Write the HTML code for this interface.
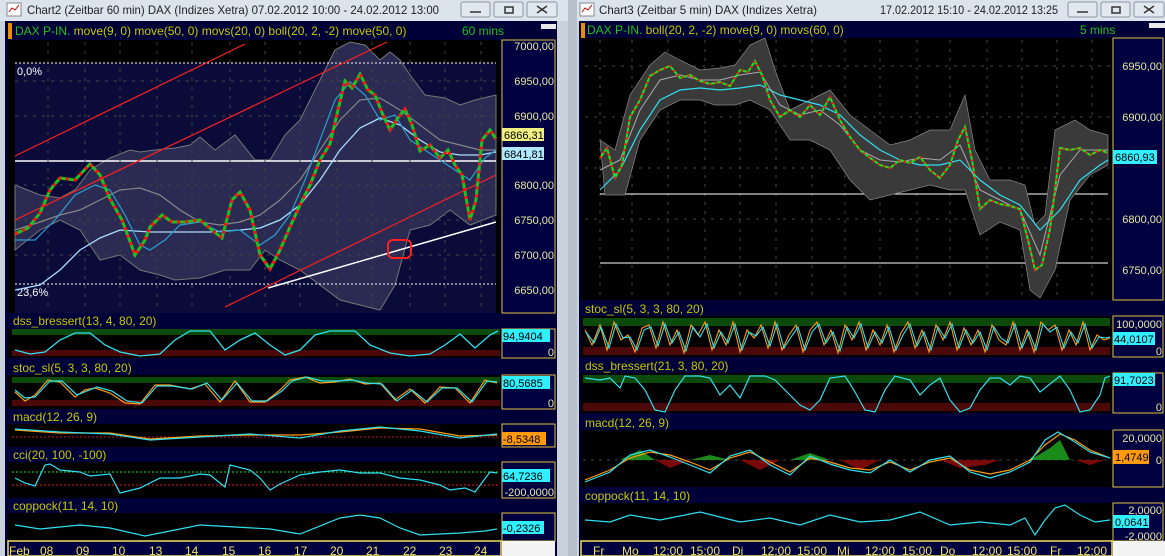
<!DOCTYPE html>
<html><head><meta charset="utf-8"><style>
html,body{margin:0;padding:0;background:#c8d0da;}
svg{display:block;font-family:"Liberation Sans",sans-serif;}
</style></head><body>
<svg width="1165" height="556" viewBox="0 0 1165 556" xmlns="http://www.w3.org/2000/svg">
<rect x="0" y="0" width="1165" height="556" fill="#c9d2dc"/>
<rect x="0" y="0" width="568" height="21" fill="#dbe3ec"/>
<rect x="577" y="0" width="588" height="21" fill="#dbe3ec"/>
<rect x="568" y="0" width="9" height="556" fill="#b8c2cc"/>
<rect x="7" y="3" width="14" height="13" fill="#fff" stroke="#888"/><path d="M9 12 l3-4 3 2 4-5" stroke="#c00" fill="none"/>
<rect x="580" y="3" width="14" height="13" fill="#fff" stroke="#888"/><path d="M582 12 l3-4 3 2 4-5" stroke="#c00" fill="none"/>
<text x="27" y="14" font-size="12" fill="#222" textLength="412" lengthAdjust="spacingAndGlyphs">Chart2 (Zeitbar 60 min)  DAX (Indizes Xetra) 07.02.2012 10:00 - 24.02.2012 13:00</text>
<text x="599" y="14" font-size="12" fill="#222" textLength="218" lengthAdjust="spacingAndGlyphs">Chart3 (Zeitbar 5 min)  DAX (Indizes Xetra)</text>
<text x="880" y="14" font-size="12" fill="#222" textLength="178" lengthAdjust="spacingAndGlyphs">17.02.2012 15:10 - 24.02.2012 13:25</text>
<g fill="#e2e8ef" stroke="#8a96a4">
<rect x="461" y="2" width="29" height="15" rx="2"/><rect x="494" y="2" width="29" height="15" rx="2"/><rect x="527" y="2" width="30" height="15" rx="2"/>
<rect x="1068" y="2" width="29" height="15" rx="2"/><rect x="1101" y="2" width="29" height="15" rx="2"/><rect x="1134" y="2" width="30" height="15" rx="2"/>
</g>
<g stroke="#333" fill="none" stroke-width="1.5">
<path d="M470 12h11M505 7h8v6h-8zM537 6l10 7M547 6l-10 7"/>
<path d="M1077 12h11M1112 7h8v6h-8zM1144 6l10 7M1154 6l-10 7"/>
</g>

<!-- LEFT CHART -->
<rect x="5" y="21" width="552" height="535" fill="#000038"/>
<rect x="8" y="23" width="4" height="16" fill="#f08c00"/>
<text x="15" y="35" font-size="12" fill="#c8c800"><tspan fill="#20c020">DAX P-IN.</tspan> move(9, 0) move(50, 0) movs(20, 0) boll(20, 2, -2) move(50, 0)</text>
<text x="462" y="35" font-size="12" fill="#20c020">60 mins</text>
<rect x="541" y="24" width="15" height="5" fill="#e8e8e8"/>
<rect x="8" y="40" width="493" height="273" fill="#000"/>
<rect x="15" y="63" width="481" height="250" fill="#0b0b3a"/>
<polygon fill="#2a2a52" stroke="#777" points="15,185 40,195 60,198 75,190 90,170 110,158 130,150 140,152 155,150 175,148 190,145 200,137 215,150 235,135 255,160 270,160 285,135 300,120 320,80 335,50 350,42 365,45 380,60 390,52 400,60 410,75 425,95 445,98 460,105 475,100 496,95 496,215 470,225 450,210 430,225 410,230 395,285 380,310 360,305 340,300 320,285 300,270 280,260 265,250 250,270 225,270 200,278 175,280 160,275 140,270 120,255 100,260 80,230 60,220 40,230 15,250"/>
<line x1="15" y1="63" x2="496" y2="63" stroke="#fff" stroke-dasharray="2,2"/>
<line x1="15" y1="284" x2="496" y2="284" stroke="#fff" stroke-dasharray="2,2"/>
<line x1="15" y1="161" x2="496" y2="161" stroke="#fff" stroke-width="1.5"/>
<text x="17" y="75" font-size="11" fill="#fff">0,0%</text>
<text x="17" y="296" font-size="11" fill="#fff">23,6%</text>
<g stroke="#444" stroke-dasharray="3,6">
<line x1="15" y1="81" x2="496" y2="81"/><line x1="15" y1="116" x2="496" y2="116"/><line x1="15" y1="185" x2="496" y2="185"/><line x1="15" y1="220" x2="496" y2="220"/><line x1="15" y1="255" x2="496" y2="255"/>
<line x1="48" y1="42" x2="48" y2="312"/><line x1="85" y1="42" x2="85" y2="312"/><line x1="120" y1="42" x2="120" y2="312"/><line x1="157" y1="42" x2="157" y2="312"/><line x1="192" y1="42" x2="192" y2="312"/><line x1="230" y1="42" x2="230" y2="312"/><line x1="265" y1="42" x2="265" y2="312"/><line x1="300" y1="42" x2="300" y2="312"/><line x1="337" y1="42" x2="337" y2="312"/><line x1="372" y1="42" x2="372" y2="312"/><line x1="410" y1="42" x2="410" y2="312"/><line x1="445" y1="42" x2="445" y2="312"/><line x1="481" y1="42" x2="481" y2="312"/>
</g>
<g stroke="#ff2020" stroke-width="1.2">
<line x1="15" y1="156" x2="245" y2="44"/><line x1="15" y1="220" x2="387" y2="42"/><line x1="225" y1="307" x2="496" y2="175"/>
</g>
<line x1="268" y1="288" x2="496" y2="222" stroke="#fff" stroke-width="1.5"/>
<rect x="388" y="240" width="23" height="18" rx="5" fill="none" stroke="#ff2020" stroke-width="2"/>
<polyline fill="none" stroke="#aaddff" stroke-width="1.3" points="15,290 40,285 60,270 80,250 100,238 120,230 150,232 180,232 210,232 240,230 260,228 280,220 300,205 320,180 340,150 360,128 380,118 400,125 420,140 440,152 460,155 480,155 496,152"/>
<polyline fill="none" stroke="#888" stroke-width="1.2" points="15,230 40,222 60,215 80,210 100,200 120,190 140,188 160,195 180,210 200,222 220,225 240,222 260,215 280,200 300,180 320,150 340,120 360,100 380,98 400,110 420,125 440,140 460,145 480,150 496,150"/>
<polyline fill="none" stroke="#2a9fd0" stroke-width="1.2" points="15,240 35,240 55,220 75,195 95,185 110,190 125,215 140,245 150,250 165,240 180,225 200,222 220,232 240,230 260,245 275,235 290,215 305,180 320,140 335,100 350,82 365,95 380,120 395,115 410,140 425,150 440,160 455,170 470,180 485,158 496,150"/>
<polyline fill="none" stroke="#20c020" stroke-width="3" points="15,234 28,228 40,213 50,190 60,178 75,180 90,164 100,175 110,199 122,220 135,255 145,240 150,227 162,215 172,222 185,222 200,220 212,230 222,238 232,200 240,192 250,210 260,255 270,269 280,250 290,227 300,205 310,185 320,160 330,144 338,110 345,81 352,88 360,74 368,90 375,95 383,115 390,130 398,118 405,109 412,125 420,151 430,145 440,158 448,150 455,165 462,175 470,220 476,200 482,140 490,130 496,139"/>
<polyline fill="none" stroke="#ff1010" stroke-width="3" stroke-dasharray="3,5" points="15,234 28,228 40,213 50,190 60,178 75,180 90,164 100,175 110,199 122,220 135,255 145,240 150,227 162,215 172,222 185,222 200,220 212,230 222,238 232,200 240,192 250,210 260,255 270,269 280,250 290,227 300,205 310,185 320,160 330,144 338,110 345,81 352,88 360,74 368,90 375,95 383,115 390,130 398,118 405,109 412,125 420,151 430,145 440,158 448,150 455,165 462,175 470,220 476,200 482,140 490,130 496,139"/>
<rect x="502" y="40" width="53" height="273" fill="#000040" stroke="#e0c040"/>
<g font-size="11" fill="#e8e8a0" text-anchor="end">
<text x="554" y="50">7000,00</text><text x="554" y="85">6950,00</text><text x="554" y="120">6900,00</text><text x="554" y="189">6800,00</text><text x="554" y="224">6750,00</text><text x="554" y="259">6700,00</text><text x="554" y="294">6650,00</text>
</g>
<rect x="502" y="128" width="42" height="13" fill="#f0f080"/><text x="504" y="139" font-size="11" fill="#000">6866,31</text>
<rect x="502" y="147" width="42" height="13" fill="#b0e8ff"/><text x="504" y="158" font-size="11" fill="#000">6841,81</text>

<g font-size="12" fill="#c8c800">
<text x="13" y="325">dss_bressert(13, 4, 80, 20)</text>
<text x="13" y="372">stoc_sl(5, 3, 3, 80, 20)</text>
<text x="13" y="421">macd(12, 26, 9)</text>
<text x="13" y="459">cci(20, 100, -100)</text>
<text x="13" y="510">coppock(11, 14, 10)</text>
</g>
<rect x="8" y="329" width="493" height="29" fill="#000"/>
<rect x="12" y="329" width="488" height="6" fill="#0c4a0c"/><rect x="12" y="350" width="488" height="6" fill="#4a0808"/>
<polyline fill="none" stroke="#30e0f0" stroke-width="1.3" points="15,350 30,354 45,352 60,340 75,333 90,333 105,345 120,352 140,356 160,354 175,340 190,331 210,331 225,350 240,340 255,333 270,345 285,355 300,350 315,335 330,331 355,331 370,345 390,353 410,356 430,354 445,345 460,334 475,348 490,335 498,331"/>
<rect x="8" y="375" width="493" height="34" fill="#000"/>
<rect x="12" y="377" width="488" height="6" fill="#0c4a0c"/><rect x="12" y="400" width="488" height="6" fill="#4a0808"/>
<polyline fill="none" stroke="#ff9a10" stroke-width="1.2" points="15,392 25,401 35,395 48,380 60,382 75,397 85,390 95,388 110,393 125,403 140,404 155,385 170,385 190,389 205,384 220,402 235,381 250,402 265,402 280,390 290,380 305,377 320,383 335,382 350,379 365,384 380,383 395,400 410,389 425,403 440,387 455,388 470,403 485,380 497,383"/>
<polyline fill="none" stroke="#30e0f0" stroke-width="1.2" points="15,390 25,398 35,397 50,381 62,381 77,395 87,391 97,387 112,391 127,401 142,403 157,386 172,386 192,389 207,383 222,400 237,383 252,401 267,401 282,391 292,381 307,377 322,381 337,381 352,380 367,383 382,384 397,401 412,390 427,402 442,388 457,388 472,402 487,381 497,382"/>
<rect x="8" y="424" width="493" height="23" fill="#000"/>
<line x1="12" y1="437" x2="500" y2="437" stroke="#c02020" stroke-dasharray="2,2"/>
<polyline fill="none" stroke="#ff9a10" stroke-width="1.2" points="15,430 60,433 110,433 150,439 200,436 250,435 300,435 340,432 380,428 420,429 460,436 497,435"/>
<polyline fill="none" stroke="#30e0f0" stroke-width="1.2" points="15,429 60,432 110,434 150,440 200,437 250,434 300,438 340,431 380,427 420,431 460,438 497,434"/>
<rect x="8" y="462" width="493" height="36" fill="#000"/>
<line x1="12" y1="472" x2="500" y2="472" stroke="#30e030" stroke-dasharray="2,2"/>
<line x1="12" y1="485" x2="500" y2="485" stroke="#e02020" stroke-dasharray="2,2"/>
<polyline fill="none" stroke="#30e0f0" stroke-width="1.2" points="15,478 25,483 35,486 45,465 50,464 60,470 80,472 90,476 110,474 120,493 140,488 160,478 180,478 200,474 210,475 225,487 230,465 250,470 260,478 270,490 280,484 300,475 320,472 340,470 360,473 380,473 400,478 420,480 440,485 450,490 465,488 475,492 490,472 497,473"/>
<rect x="8" y="513" width="493" height="28" fill="#000"/>
<polyline fill="none" stroke="#30e0f0" stroke-width="1.2" points="15,525 40,529 80,525 110,528 145,536 200,525 270,529 300,534 340,518 360,515 380,518 400,528 420,535 460,533 485,531 497,529"/>
<g fill="#000040" stroke="#e0c040">
<rect x="502" y="329" width="53" height="29"/><rect x="502" y="375" width="53" height="34"/><rect x="502" y="424" width="53" height="23"/><rect x="502" y="462" width="53" height="36"/><rect x="502" y="513" width="53" height="28"/>
</g>
<g font-size="11" fill="#e8e8a0" text-anchor="end">
<text x="554" y="356">0</text><text x="554" y="407">0</text>
<text x="554" y="496">-200,0000</text>
</g>
<rect x="502" y="329" width="48" height="13" fill="#30f0ff"/><text x="503" y="340" font-size="11" fill="#000">94,9404</text>
<rect x="502" y="376" width="48" height="13" fill="#30f0ff"/><text x="503" y="387" font-size="11" fill="#000">80,5685</text>
<rect x="502" y="432" width="44" height="13" fill="#ff9a10"/><text x="503" y="443" font-size="11" fill="#000">-8,5348</text>
<rect x="502" y="469" width="48" height="13" fill="#30f0ff"/><text x="503" y="480" font-size="11" fill="#000">64,7236</text>
<rect x="502" y="521" width="42" height="13" fill="#30f0ff"/><text x="503" y="532" font-size="11" fill="#000">-0,2326</text>
<rect x="8" y="541" width="493" height="15" fill="#000040" stroke="#f0e060" stroke-width="1.5"/>
<rect x="502" y="541" width="53" height="15" fill="#f4f4f4"/>
<g font-size="12" fill="#f0e060">
<text x="9" y="555">Feb</text><text x="40" y="555">08</text><text x="76" y="555">09</text><text x="112" y="555">10</text><text x="149" y="555">13</text><text x="185" y="555">14</text><text x="222" y="555">15</text><text x="258" y="555">16</text><text x="294" y="555">17</text><text x="330" y="555">20</text><text x="366" y="555">21</text><text x="403" y="555">22</text><text x="439" y="555">23</text><text x="474" y="555">24</text>
</g>

<!-- RIGHT CHART -->
<rect x="579" y="21" width="586" height="535" fill="#000038"/>
<rect x="581" y="23" width="4" height="16" fill="#f08c00"/>
<text x="587" y="34" font-size="12" fill="#c8c800"><tspan fill="#20c020">DAX P-IN.</tspan> boll(20, 2, -2) move(9, 0) movs(60, 0)</text>
<text x="1080" y="34" font-size="12" fill="#20c020">5 mins</text>
<rect x="1149" y="23" width="16" height="5" fill="#e8e8e8"/>
<rect x="581" y="38" width="531" height="262" fill="#000"/>
<g stroke="#444" stroke-dasharray="3,6">
<line x1="585" y1="66" x2="1110" y2="66"/><line x1="585" y1="117" x2="1110" y2="117"/><line x1="585" y1="168" x2="1110" y2="168"/><line x1="585" y1="219" x2="1110" y2="219"/>
<line x1="600" y1="40" x2="600" y2="298"/><line x1="632" y1="40" x2="632" y2="298"/><line x1="668" y1="40" x2="668" y2="298"/><line x1="705" y1="40" x2="705" y2="298"/><line x1="740" y1="40" x2="740" y2="298"/><line x1="776" y1="40" x2="776" y2="298"/><line x1="812" y1="40" x2="812" y2="298"/><line x1="845" y1="40" x2="845" y2="298"/><line x1="880" y1="40" x2="880" y2="298"/><line x1="917" y1="40" x2="917" y2="298"/><line x1="950" y1="40" x2="950" y2="298"/><line x1="987" y1="40" x2="987" y2="298"/><line x1="1022" y1="40" x2="1022" y2="298"/><line x1="1057" y1="40" x2="1057" y2="298"/><line x1="1092" y1="40" x2="1092" y2="298"/>
</g>
<line x1="600" y1="194" x2="1108" y2="194" stroke="#fff"/>
<line x1="600" y1="263" x2="1108" y2="263" stroke="#fff"/>
<polygon fill="#3a3a3a" stroke="#888" stroke-width="0.7" points="600,140 615,150 630,95 650,65 665,52 680,60 700,70 720,68 735,65 750,45 765,38 775,70 790,110 810,100 830,90 850,115 870,130 890,145 910,140 930,130 950,130 965,95 975,150 990,180 1010,180 1025,185 1035,225 1045,215 1055,130 1075,120 1090,130 1108,135 1108,165 1090,175 1070,200 1055,270 1040,298 1030,290 1020,230 1000,222 980,235 965,190 950,190 930,185 910,190 890,195 870,200 850,180 830,150 810,140 790,140 770,110 750,100 735,105 715,105 700,100 680,100 660,110 640,140 625,195 605,195"/>
<polyline fill="none" stroke="#30e0f0" stroke-width="1.2" points="600,190 620,170 640,130 660,100 680,90 700,88 720,90 740,88 760,85 780,95 800,100 820,105 840,115 860,135 880,150 900,160 920,165 940,165 960,160 980,180 1000,195 1020,205 1040,230 1060,210 1080,180 1100,165 1108,160"/>
<polyline fill="none" stroke="#aaa" stroke-width="1" points="600,170 620,160 640,110 660,80 680,75 700,80 720,80 740,75 760,72 780,105 800,115 820,110 840,125 860,150 880,160 900,162 920,158 940,160 960,145 980,190 1000,200 1020,210 1040,255 1060,175 1080,150 1108,150"/>
<polyline fill="none" stroke="#20e020" stroke-width="2" points="600,158 607,148 615,178 622,165 630,117 640,100 650,76 660,70 670,66 680,78 690,75 700,81 710,84 720,82 730,86 740,70 748,72 755,61 762,75 770,100 780,117 790,110 800,117 810,105 820,115 830,97 840,120 850,137 860,150 870,158 880,165 890,168 900,160 910,163 920,157 930,170 940,178 950,165 958,140 965,127 972,160 980,209 990,200 1000,204 1010,206 1020,209 1028,240 1035,270 1042,265 1050,229 1055,190 1060,148 1070,150 1080,148 1090,155 1100,150 1108,153"/>
<polyline fill="none" stroke="#ff1010" stroke-width="2" stroke-dasharray="2,4" points="600,158 607,148 615,178 622,165 630,117 640,100 650,76 660,70 670,66 680,78 690,75 700,81 710,84 720,82 730,86 740,70 748,72 755,61 762,75 770,100 780,117 790,110 800,117 810,105 820,115 830,97 840,120 850,137 860,150 870,158 880,165 890,168 900,160 910,163 920,157 930,170 940,178 950,165 958,140 965,127 972,160 980,209 990,200 1000,204 1010,206 1020,209 1028,240 1035,270 1042,265 1050,229 1055,190 1060,148 1070,150 1080,148 1090,155 1100,150 1108,153"/>
<rect x="1113" y="38" width="50" height="262" fill="#000040" stroke="#e0c040"/>
<g font-size="11" fill="#e8e8a0" text-anchor="end">
<text x="1162" y="70">6950,00</text><text x="1162" y="121">6900,00</text><text x="1162" y="223">6800,00</text><text x="1162" y="274">6750,00</text>
</g>
<rect x="1113" y="150" width="44" height="14" fill="#30f0ff"/><text x="1115" y="161" font-size="11" fill="#000">6860,93</text>
<g font-size="12" fill="#c8c800">
<text x="585" y="313">stoc_sl(5, 3, 3, 80, 20)</text>
<text x="585" y="370">dss_bressert(21, 3, 80, 20)</text>
<text x="585" y="427">macd(12, 26, 9)</text>
<text x="585" y="500">coppock(11, 14, 10)</text>
</g>
<rect x="581" y="316" width="531" height="41" fill="#000"/>
<rect x="583" y="318" width="527" height="8" fill="#0c4a0c"/><rect x="583" y="347" width="527" height="8" fill="#4a0808"/>
<polyline fill="none" stroke="#ff9a10" stroke-width="1.1" points="585,330 592,345 600,325 607,350 614,322 621,340 628,335 635,352 642,328 649,325 656,348 663,322 670,345 677,330 684,353 691,325 698,335 705,322 712,350 719,330 726,345 733,322 740,352 747,330 754,338 761,325 768,348 775,322 782,350 789,335 796,325 803,352 810,330 817,322 824,345 831,330 838,353 845,325 852,340 859,322 866,350 873,330 880,345 887,325 894,352 901,333 908,322 915,348 922,330 929,352 936,325 943,340 950,322 957,350 964,328 971,345 978,330 985,352 992,325 999,340 1006,345 1013,322 1020,350 1027,330 1034,352 1041,322 1048,330 1055,325 1062,350 1069,330 1076,345 1083,322 1090,350 1097,335 1104,340 1110,338"/>
<polyline fill="none" stroke="#30e0f0" stroke-width="1.1" points="586,332 594,343 601,327 609,348 616,324 623,338 630,337 637,350 644,330 651,327 658,346 665,324 672,343 679,332 686,351 693,327 700,337 707,324 714,348 721,332 728,343 735,324 742,350 749,332 756,336 763,327 770,346 777,324 784,348 791,337 798,327 805,350 812,332 819,324 826,343 833,332 840,351 847,327 854,338 861,324 868,348 875,332 882,343 889,327 896,350 903,335 910,324 917,346 924,332 931,350 938,327 945,338 952,324 959,348 966,330 973,343 980,332 987,350 994,327 1001,338 1008,343 1015,324 1022,348 1029,332 1036,350 1043,324 1050,332 1057,327 1064,348 1071,332 1078,343 1085,324 1092,348 1099,337 1106,338 1110,337"/>
<rect x="581" y="373" width="531" height="40" fill="#000"/>
<rect x="583" y="375" width="527" height="8" fill="#0c4a0c"/><rect x="583" y="403" width="527" height="8" fill="#4a0808"/>
<polyline fill="none" stroke="#30e0f0" stroke-width="1.2" points="585,378 600,380 610,378 620,388 625,376 635,378 645,390 655,410 665,412 675,390 685,376 700,376 710,378 720,395 730,385 740,398 750,376 765,376 775,380 790,395 800,405 810,410 820,400 830,378 845,376 855,392 865,410 875,412 885,390 895,376 910,380 920,395 930,385 940,378 950,400 960,412 970,408 980,390 990,378 1000,378 1010,385 1020,376 1030,378 1040,392 1050,384 1060,376 1070,390 1080,412 1090,410 1100,395 1105,378 1110,376"/>
<rect x="581" y="430" width="531" height="57" fill="#000"/>
<line x1="583" y1="460" x2="1110" y2="460" stroke="#444" stroke-dasharray="3,5"/>
<path d="M620 460 L640 450 L655 460Z M690 460 L710 455 L730 460Z M790 460 L810 453 L830 460Z M1030 460 L1050 448 L1060 440 L1070 460Z" fill="#1a8a1a"/>
<path d="M655 460 L670 468 L690 460Z M740 460 L760 470 L780 460Z M840 460 L860 470 L880 460Z M940 460 L960 468 L985 465 L1000 460Z M1075 460 L1090 465 L1105 460Z" fill="#7a0a0a"/>
<polyline fill="none" stroke="#ff9a10" stroke-width="1.2" points="585,480 610,470 630,458 650,452 670,455 690,462 710,470 730,458 750,452 770,462 790,472 810,458 830,462 850,468 870,470 890,462 910,470 930,462 950,458 970,470 990,474 1010,470 1030,460 1045,445 1060,434 1075,440 1090,450 1110,458"/>
<polyline fill="none" stroke="#30e0f0" stroke-width="1.2" points="585,482 610,472 630,455 650,450 670,457 690,465 710,473 730,456 750,450 770,465 790,475 810,456 830,464 850,470 870,473 890,460 910,472 930,460 950,456 970,472 990,478 1010,472 1030,462 1045,440 1058,432 1075,442 1090,452 1110,458"/>
<rect x="581" y="503" width="531" height="38" fill="#000"/>
<polyline fill="none" stroke="#30e0f0" stroke-width="1.2" points="585,520 610,522 630,515 660,520 700,512 740,522 770,518 800,525 830,515 860,522 890,520 920,512 950,525 980,522 1010,525 1025,518 1035,535 1045,520 1055,508 1065,505 1080,515 1095,522 1110,520"/>
<g fill="#000040" stroke="#e0c040">
<rect x="1113" y="316" width="50" height="41"/><rect x="1113" y="373" width="50" height="40"/><rect x="1113" y="430" width="50" height="57"/><rect x="1113" y="503" width="50" height="38"/>
</g>
<g font-size="11" fill="#e8e8a0" text-anchor="end">
<text x="1162" y="328">100,0000</text><text x="1162" y="355">0</text><text x="1162" y="411">0</text>
<text x="1162" y="442">20,0000</text><text x="1162" y="464">0</text>
<text x="1162" y="514">2,0000</text><text x="1162" y="540">-2,0000</text>
</g>
<rect x="1113" y="332" width="42" height="13" fill="#30f0ff"/><text x="1114" y="343" font-size="11" fill="#000">44,0107</text>
<rect x="1113" y="373" width="42" height="13" fill="#30f0ff"/><text x="1114" y="384" font-size="11" fill="#000">91,7023</text>
<rect x="1113" y="450" width="36" height="14" fill="#ff9a10"/><text x="1115" y="461" font-size="11" fill="#000">1,4749</text>
<rect x="1113" y="515" width="36" height="13" fill="#30f0ff"/><text x="1115" y="526" font-size="11" fill="#000">0,0641</text>
<rect x="581" y="541" width="531" height="15" fill="#000040" stroke="#f0e060" stroke-width="1.5"/>
<rect x="1113" y="541" width="52" height="15" fill="#f4f4f4"/>
<g font-size="12" fill="#f0e060">
<text x="593" y="555">Fr</text><text x="622" y="555">Mo</text><text x="653" y="555">12:00</text><text x="690" y="555">15:00</text><text x="732" y="555">Di</text><text x="761" y="555">12:00</text><text x="797" y="555">15:00</text><text x="837" y="555">Mi</text><text x="865" y="555">12:00</text><text x="902" y="555">15:00</text><text x="940" y="555">Do</text><text x="972" y="555">12:00</text><text x="1007" y="555">15:00</text><text x="1050" y="555">Fr</text><text x="1077" y="555">12:00</text>
</g>
</svg>
</body></html>
